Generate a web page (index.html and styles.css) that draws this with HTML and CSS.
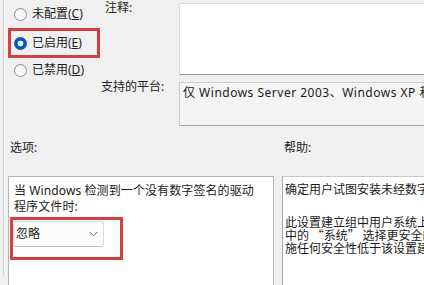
FILE: index.html
```
<!DOCTYPE html>
<html lang="zh-CN">
<head>
<meta charset="utf-8">
<title>已启用</title>
<link rel="stylesheet" href="styles.css">
</head>
<body>
<div class="page">
  <div class="top">
    <div class="radios">
      <div class="radio"><span class="dot"></span><span>未配置(<u>C</u>)</span></div>
      <div class="radio hl"><span class="dot checked"></span><span>已启用(<u>E</u>)</span></div>
      <div class="radio last"><span class="dot"></span><span>已禁用(<u>D</u>)</span></div>
    </div>
    <div class="fields">
      <span class="flabel note">注释:</span>
      <div class="comment-box"></div>
      <span class="flabel">支持的平台:</span>
      <div class="platform-box">仅 Windows Server 2003、Windows XP 和 Windows 2000 操作系统</div>
    </div>
  </div>
  <div class="sections">
    <div class="sec">
      <div class="sec-label">选项:</div>
      <div class="panel options">
        <p class="opt-text">当 Windows 检测到一个没有数字签名的驱动<br>程序文件时:</p>
        <div class="redbox">
          <div class="select"><span>忽略</span><svg class="chev" width="9" height="6" viewBox="0 0 9 6"><polyline points="0.5,0.8 4.5,4.8 8.5,0.8" fill="none" stroke="#6a6a6a" stroke-width="1"/></svg></div>
        </div>
      </div>
    </div>
    <div class="sec">
      <div class="sec-label">帮助:</div>
      <div class="panel help">
        <p class="hp first">确定用户试图安装未经数字签名的设备驱动程序时，系统会如何响应。</p>
        <p class="hp">此设置建立组中用户系统上允许的最低安全响应。用户可以使用控制面板</p>
        <p class="hp">中的 “系统” 选择更安全的设置。但是，当启用此设置时，系统不会实</p>
        <p class="hp">施任何安全性低于该设置建立的设置的响应。</p>
      </div>
    </div>
  </div>
</div>
</body>
</html>
```
FILE: styles.css
```
html, body {
  margin: 0;
  padding: 0;
}
body {
  width: 424px;
  height: 285px;
  overflow: hidden;
  background: #f0f0f0;
  color: #1b1b1b;
  font-family: "Noto Sans", "Noto Sans CJK SC", sans-serif;
  font-size: 12px;
  line-height: 14px;
}
.page {
  margin-left: 3px;
  border-left: 1px solid #d0d0d0;
  height: 275px;
  width: 520px;
}
.top {
  display: flex;
  height: 126px;
}
.radios {
  width: 97px;
  flex: none;
  display: flex;
  flex-direction: column;
}
.radio {
  display: flex;
  align-items: center;
  gap: 5px;
  height: 28px;
  padding-left: 10px;
  white-space: nowrap;
}
.radio.hl {
  box-sizing: border-box;
  width: 92px;
  height: 30px;
  margin-left: 4px;
  padding-left: 3px;
  border: 3px solid #d2403f;
}
.radio.last {
  height: 24px;
}
.dot {
  flex: none;
  box-sizing: border-box;
  width: 13px;
  height: 13px;
  border-radius: 50%;
  border: 1px solid #8e8e8e;
  background: #f7f7f7;
}
.dot.checked {
  border: none;
  background: radial-gradient(circle, #ffffff 0 2.6px, #005fb8 3.2px);
}
.fields {
  flex: none;
  display: grid;
  grid-template-columns: 78px 320px;
  grid-template-rows: 72px 44px;
  row-gap: 7px;
  padding-top: 3px;
}
.flabel {
  margin-top: -2px;
  white-space: nowrap;
  color: #222;
}
.flabel.note {
  padding-left: 4px;
}
.comment-box {
  box-sizing: border-box;
  background: #ffffff;
  border: 1px solid #dadada;
  border-bottom-color: #9a9a9a;
  border-radius: 2px 2px 0 0;
}
.platform-box {
  box-sizing: border-box;
  background: #f4f4f4;
  border: 1px solid #cdcdcd;
  border-bottom-color: #a8a8a8;
  padding: 3px 0 0 3px;
  white-space: nowrap;
  overflow: hidden;
  letter-spacing: 0.5px;
}
.sections {
  display: grid;
  grid-template-columns: 266px 240px;
  column-gap: 8px;
  margin-left: 4px;
}
.sec-label {
  margin-top: 15px;
  margin-bottom: 21px;
  padding-left: 2px;
  color: #222;
}
.panel {
  box-sizing: border-box;
  background: #ffffff;
  height: 130px;
}
.options {
  border: 1px solid #b6b6b6;
  padding: 6px 0 0 1px;
}
.opt-text {
  margin: 0;
  padding-left: 4px;
  line-height: 16px;
  white-space: nowrap;
  letter-spacing: 0.1px;
}
.redbox {
  box-sizing: border-box;
  width: 113px;
  margin-top: 2px;
  border: 3px solid #d2403f;
  padding: 1px 0 10px 0;
}
.select {
  box-sizing: border-box;
  width: 91px;
  height: 26px;
  display: flex;
  align-items: center;
  justify-content: space-between;
  background: #fcfcfc;
  border: 1px solid #d8d8d8;
  border-bottom-color: #bdbdbd;
  border-radius: 3px;
  padding: 0 5px 0 2px;
}
.chev {
  display: block;
}
.help {
  border-left: 1px solid #a9a9a9;
  border-top: 1px solid #c9c9c9;
  padding: 5px 0 0 2px;
  font-family: "Noto Sans CJK SC", sans-serif;
}
.hp {
  margin: 0;
  line-height: 13px;
  white-space: nowrap;
  overflow: hidden;
}
.hp.first {
  margin-bottom: 20px;
}
```
